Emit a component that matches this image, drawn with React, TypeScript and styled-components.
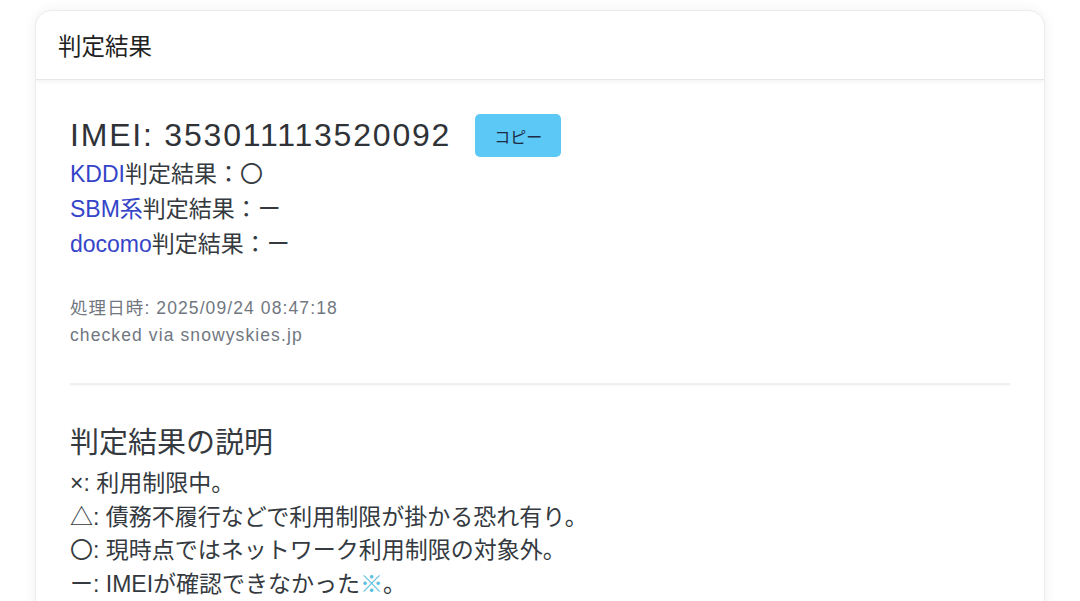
import styled, { createGlobalStyle } from 'styled-components'

const GlobalStyle = createGlobalStyle`
  body {
    margin: 0;
    background: #ffffff;
    font-family: "Liberation Sans", "Noto Sans CJK JP", sans-serif;
    color: #343a40;
  }
`

const results = [
  { carrier: 'KDDI', mark: '〇' },
  { carrier: 'SBM系', mark: 'ー' },
  { carrier: 'docomo', mark: 'ー' },
]

const App = () => {
  return (
    <>
      <GlobalStyle />
      <Page>
        <Card>
          <CardHeader>判定結果</CardHeader>
          <CardBody>
            <ImeiRow>
              <Imei>IMEI: 353011113520092</Imei>
              <CopyButton type="button">コピー</CopyButton>
            </ImeiRow>
            {results.map((r) => (
              <ResultLine key={r.carrier}>
                <CarrierLink href="#">{r.carrier}</CarrierLink>判定結果：{r.mark}
              </ResultLine>
            ))}

            <Meta>
              <div>処理日時: 2025/09/24 08:47:18</div>
              <div>checked via snowyskies.jp</div>
            </Meta>

            <Divider />

            <SectionTitle>判定結果の説明</SectionTitle>
            <Legend>
              <li>×: 利用制限中。</li>
              <li>△: 債務不履行などで利用制限が掛かる恐れ有り。</li>
              <li>〇: 現時点ではネットワーク利用制限の対象外。</li>
              <li>
                ー: IMEIが確認できなかった<Note>※</Note>。
              </li>
            </Legend>
          </CardBody>
        </Card>
      </Page>
    </>
  )
}

export default App

const Page = styled.div`
  padding: 10px 35px 0;
`

const Card = styled.div`
  border: 1px solid #ececec;
  border-radius: 16px;
  box-shadow: 0 0 14px rgba(0, 0, 0, 0.06);
  background: #fff;
  overflow: hidden;
`

const CardHeader = styled.div`
  display: flex;
  align-items: center;
  height: 68px;
  padding: 0 22px;
  font-size: 23.5px;
  color: #222;
  border-bottom: 1px solid #e6e6e6;
  box-shadow: 0 2px 4px rgba(0, 0, 0, 0.05);
`

const CardBody = styled.div`
  padding: 34px 34px 20px;
`

const ImeiRow = styled.div`
  display: flex;
  align-items: center;
  gap: 24px;
  height: 43px;
`

const Imei = styled.span`
  font-size: 32px;
  letter-spacing: 1.8px;
  color: #2f3338;
`

const CopyButton = styled.button`
  height: 43px;
  padding: 0 19px;
  border: none;
  border-radius: 5px;
  background: #5bc8f6;
  color: #1d2b44;
  font-family: "Noto Sans CJK JP", sans-serif;
  font-size: 16px;
`

const ResultLine = styled.div`
  font-size: 23px;
  line-height: 35px;
  color: #343a40;
`

const CarrierLink = styled.a`
  color: #3545c8;
  text-decoration: none;
`

const Meta = styled.div`
  margin-top: 33px;
  font-size: 17.5px;
  line-height: 27px;
  letter-spacing: 1.1px;
  color: #707780;
`

const Divider = styled.hr`
  margin: 34px 0 0;
  border: none;
  height: 2px;
  background: #efefef;
  box-shadow: 0 1px 2px rgba(0, 0, 0, 0.03);
`

const SectionTitle = styled.div`
  margin-top: 38px;
  font-size: 29px;
  line-height: 40px;
  color: #343a40;
`

const Legend = styled.ul`
  list-style: none;
  margin: 4px 0 0;
  padding: 0;
  font-size: 23px;
  line-height: 33.5px;
  color: #343a40;
`

const Note = styled.span`
  color: #5bc0de;
`
